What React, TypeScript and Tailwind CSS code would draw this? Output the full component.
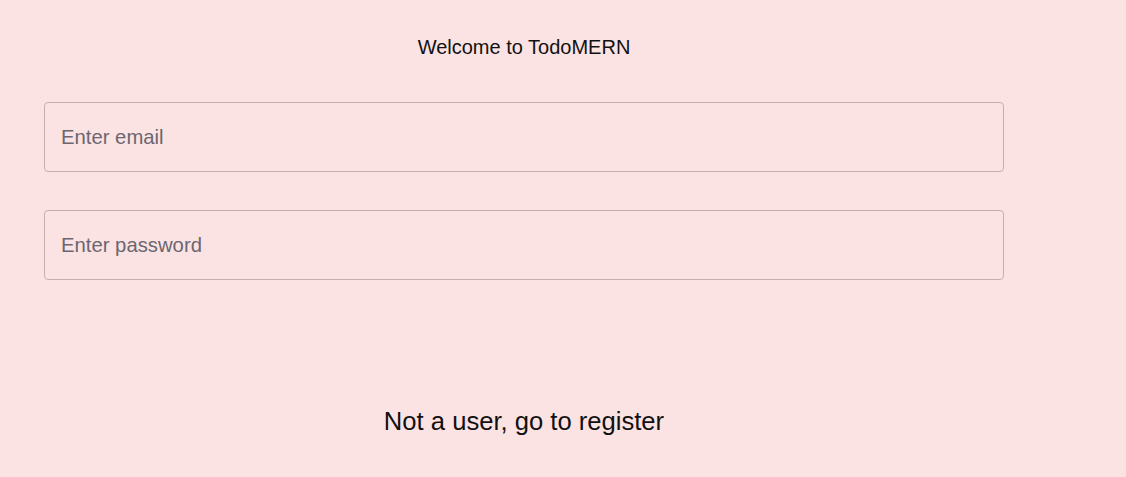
import React, { useState } from 'react';

export default function App() {
  const [email, setEmail] = useState('');
  const [password, setPassword] = useState('');

  return (
    <div className="min-h-screen w-full bg-[#fbe3e3] font-['Liberation_Sans',Arial,sans-serif]">
      <div className="ml-[44px] w-[960px] pt-[35px]">
        <h1 className="text-center text-[20px] leading-[24px] text-[#111]">Welcome to TodoMERN</h1>
        <form className="mt-[43px] flex flex-col gap-[38px]" onSubmit={(e) => e.preventDefault()}>
          <input
            type="email"
            value={email}
            onChange={(e) => setEmail(e.target.value)}
            placeholder="Enter email"
            className="h-[70px] w-full rounded-[4px] border border-[#c7adb2] bg-transparent px-[16px] text-[20.3px] text-[#222] placeholder-[#6b6670] outline-none"
          />
          <input
            type="password"
            value={password}
            onChange={(e) => setPassword(e.target.value)}
            placeholder="Enter password"
            className="h-[70px] w-full rounded-[4px] border border-[#c7adb2] bg-transparent px-[16px] text-[20.3px] text-[#222] placeholder-[#6b6670] outline-none"
          />
        </form>
        <p className="mt-[126px] text-center text-[25.6px] leading-[30px] text-[#111]">Not a user, go to register</p>
      </div>
    </div>
  );
}
